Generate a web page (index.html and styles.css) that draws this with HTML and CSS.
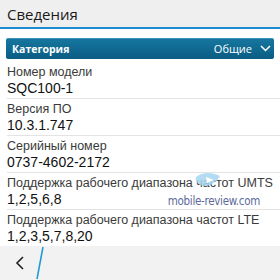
FILE: index.html
```html
<!DOCTYPE html>
<html lang="ru">
<head>
  <meta charset="UTF-8">
  <title>Сведения</title>
  <link rel="stylesheet" href="styles.css">
</head>
<body>
  <div class="screen">
    <!-- Title bar -->
    <div class="title-bar">
      <h1>Сведения</h1>
    </div>

    <!-- Category dropdown -->
    <div class="category">
      <span class="category-label">Категория</span>
      <span class="category-value">Общие
        <svg class="chevron" width="11" height="7" viewBox="0 0 11 7">
          <path d="M1 1 L5.5 5.5 L10 1" fill="none" stroke="#fff" stroke-width="1.5"/>
        </svg>
      </span>
    </div>

    <!-- Info list -->
    <div class="info-list">
      <div class="info-row">
        <div class="info-label">Номер модели</div>
        <div class="info-value">SQC100-1</div>
      </div>
      <div class="info-row">
        <div class="info-label">Версия ПО</div>
        <div class="info-value">10.3.1.747</div>
      </div>
      <div class="info-row">
        <div class="info-label">Серийный номер</div>
        <div class="info-value">0737-4602-2172</div>
      </div>
      <div class="info-row">
        <div class="info-label">Поддержка рабочего диапазона частот UMTS</div>
        <div class="info-value">1,2,5,6,8</div>
        <div class="watermark">
          <svg class="wm-logo" width="26" height="16" viewBox="0 0 26 16">
            <path d="M1 5 C7 0 17 0 25 4 C21 11 13 16 5 13 C2 11 0 8 1 5 Z" fill="#a6d6f0" opacity="0.85"/>
            <path d="M11 5 L19 8 L12 11 Z" fill="#fff"/>
          </svg>
          <span class="wm-text">mobile-review.com</span>
        </div>
      </div>
      <div class="info-row">
        <div class="info-label">Поддержка рабочего диапазона частот LTE</div>
        <div class="info-value">1,2,3,5,7,8,20</div>
      </div>
    </div>

    <!-- Bottom action bar -->
    <div class="action-bar">
      <svg class="back" width="10" height="14" viewBox="0 0 10 14">
        <path d="M8 1 L2 7 L8 13" fill="none" stroke="#222" stroke-width="1.6"/>
      </svg>
      <svg class="slash" width="8" height="34" viewBox="0 0 8 34">
        <path d="M7 1 L1 33" stroke="#1e9ad6" stroke-width="1.6"/>
      </svg>
    </div>
  </div>
</body>
</html>
```

FILE: styles.css
```css
/* General */
body {
  margin: 0;
  font-family: 'Open Sans', sans-serif;
  color: #222;
  background: #fff;
}

.screen {
  width: 280px;
  height: 280px;
  overflow: hidden;
  display: flex;
  flex-direction: column;
}

/* Title bar */
.title-bar {
  height: 29px;
  background: #efefef;
  border-bottom: 2px solid #1a8ccf;
  padding-left: 7px;
  display: flex;
  align-items: center;
}

.title-bar h1 {
  margin: 0;
  font-size: 15px;
  font-weight: normal;
  color: #1a1a1a;
}

/* Category dropdown */
.category {
  margin: 9px 6px 0;
  height: 21px;
  background: linear-gradient(#16769f, #0a5c83);
  border-top: 1px solid #3a92bb;
  border-radius: 2px;
  color: #fff;
  font-size: 11px;
  display: flex;
  align-items: center;
  justify-content: space-between;
  padding: 0 3px 0 6px;
}

.category-label {
  font-weight: bold;
  font-size: 10.5px;
}

.category-value {
  display: flex;
  align-items: center;
  gap: 8px;
}

/* Info list */
.info-list {
  flex: 1;
  padding: 3px 0 0 7px;
  font-family: 'Liberation Sans', Arial, sans-serif;
}

.info-row {
  position: relative;
  height: 36px;
  border-bottom: 1px solid #e3e3e3;
  display: flex;
  flex-direction: column;
  justify-content: center;
}

.info-row:last-child {
  border-bottom: none;
}

.info-label {
  font-size: 12.5px;
  color: #3a3a3a;
  line-height: 16px;
}

.info-value {
  font-size: 14px;
  color: #111;
  line-height: 16px;
}

.watermark {
  position: absolute;
  right: 20px;
  top: -1px;
  display: flex;
  flex-direction: column;
  align-items: center;
}

.wm-logo {
  margin-right: 12px;
}

.wm-text {
  font-family: 'DejaVu Sans Condensed', 'Liberation Sans Narrow', sans-serif;
  font-size: 11.5px;
  letter-spacing: -0.3px;
  color: #5c6a9c;
  margin-top: 6px;
}

/* Action bar */
.action-bar {
  height: 37px;
  background: #f2f2f2;
  display: flex;
  align-items: center;
  padding-left: 15px;
  gap: 11px;
}
```
